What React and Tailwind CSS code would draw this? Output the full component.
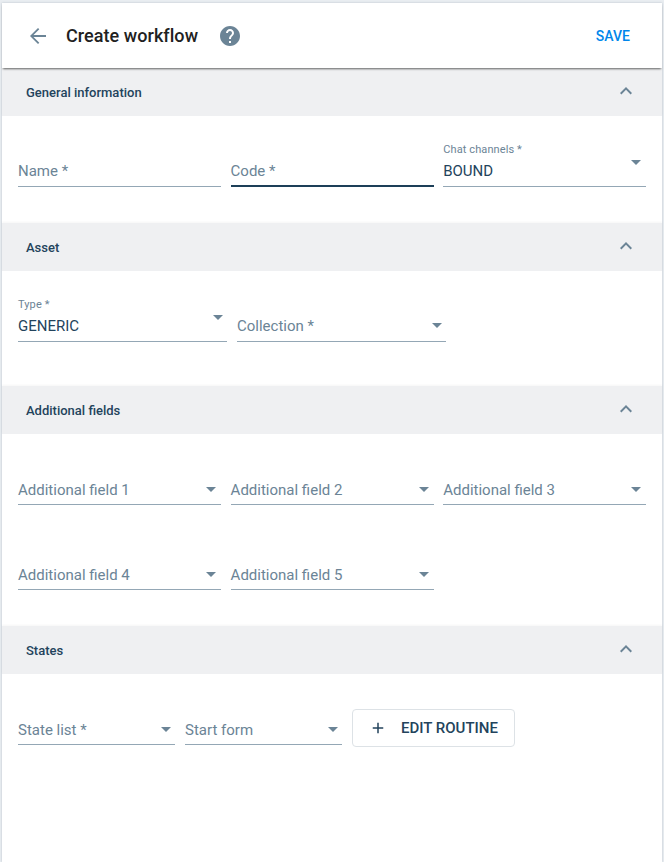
import React from "react";

function Section({ title, bodyClass, children }) {
  return (
    <section>
      <div className="flex h-12 items-center justify-between bg-[#eff0f2] pr-6 pl-6 shadow-[0_-1px_2px_rgba(0,0,0,0.04)]">
        <h2 className="pt-0.5 text-[13px] leading-5 font-medium text-[#23435c]">{title}</h2>
        <svg className="-mt-0.5 size-6 text-[#6b8496]" viewBox="0 0 24 24" fill="currentColor">
          <path d="M12 8l-6 6 1.41 1.41L12 10.83l4.59 4.58L18 14z" />
        </svg>
      </div>
      <div className={`px-4 pt-[26px] ${bodyClass}`}>{children}</div>
    </section>
  );
}

function Field({ label, value, select = false, focused = false, low = false, width = "" }) {
  return (
    <div
      className={`flex h-[45px] justify-between ${
        focused ? "border-b-2 border-[#1d3f58]" : "border-b border-[#94a7b5]"
      } ${low ? "pt-px" : ""} ${width}`}
    >
      <div className="flex flex-col whitespace-nowrap">
        <span className="h-[19px] text-[11px] leading-[15px] tracking-[0.01em] text-[#6b8496]">{value ? label : ""}</span>
        <span className={`text-[15px] leading-5 ${value ? "text-[#23435c]" : "text-[#6b8496]"}`}>
          {value || label}
        </span>
      </div>
      {select && (
        <svg
          className={`mr-1 h-[5px] w-2.5 text-[#6b8496] ${value ? "mt-[18px]" : "mt-[26px]"}`}
          viewBox="0 0 10 5"
          fill="currentColor"
        >
          <path d="M0 0l5 5 5-5z" />
        </svg>
      )}
    </div>
  );
}

export default function App() {
  return (
    <div className="h-[862px] overflow-hidden bg-[#e9edf1] px-0.5 pt-[3px] font-[Roboto,sans-serif]">
      <main className="h-full bg-white shadow-[0_0_2px_rgba(70,90,110,0.3)]">
        <header className="relative flex h-[65px] items-center bg-white pr-8 pl-6 shadow-[0_2px_2px_-1px_rgba(0,0,0,0.6)]">
          <svg className="size-6 text-[#6b8496]" viewBox="0 0 24 24" fill="currentColor">
            <path d="M20 11.1H7.5l5.8-5.8L12 4l-8 8 8 8 1.3-1.3-5.8-5.8H20z" />
          </svg>
          <h1 className="ml-4 w-[132px] text-lg leading-6 font-medium tracking-[0.003em] whitespace-nowrap text-[#212121]">
            Create workflow
          </h1>
          <svg className="ml-5 size-6 text-[#6b8496]" viewBox="0 0 24 24" fill="currentColor">
            <path d="M12 2C6.48 2 2 6.48 2 12s4.48 10 10 10 10-4.48 10-10S17.52 2 12 2zm1 17h-2v-2h2v2zm2.07-7.75l-.9.92C13.45 12.9 13 13.5 13 15h-2v-.5c0-1.1.45-2.1 1.17-2.83l1.24-1.26c.37-.36.59-.86.59-1.41 0-1.1-.9-2-2-2s-2 .9-2 2H8c0-2.21 1.79-4 4-4s4 1.79 4 4c0 .88-.36 1.68-.93 2.25z" />
          </svg>
          <button className="ml-auto pt-px text-sm font-medium text-[#0086eb]">SAVE</button>
        </header>

        <Section title="General information" bodyClass="grid grid-cols-[203px_203px_203px] gap-x-[9.6px] pb-9">
          <Field label="Name *" />
          <Field label="Code *" focused />
          <Field label="Chat channels *" value="BOUND" select width="[&>svg]:mr-[5px]" />
        </Section>

        <Section title="Asset" bodyClass="flex gap-x-2.5 pb-11">
          <Field label="Type *" value="GENERIC" select width="w-[209px]" />
          <Field label="Collection *" select width="w-[209px]" />
        </Section>

        <Section
          title="Additional fields"
          bodyClass="grid grid-cols-[203px_203px_203px] gap-x-[9.6px] gap-y-10 pb-9 [&_svg]:mr-[5px]"
        >
          <Field label="Additional field 1" select low />
          <Field label="Additional field 2" select low />
          <Field label="Additional field 3" select low />
          <Field label="Additional field 4" select low />
          <Field label="Additional field 5" select low />
        </Section>

        <Section title="States" bodyClass="flex gap-x-2.5">
          <Field label="State list *" select low width="w-[157px]" />
          <Field label="Start form" select low width="w-[157px]" />
          <button className="mt-[9px] flex h-[38px] w-[163px] items-center rounded border border-[#dde2e6] pl-[15px] text-[#23435c]">
            <svg className="size-5" viewBox="0 0 20 20" fill="none" stroke="currentColor" strokeWidth="1.5">
              <path d="M10 4.75v10.5M4.75 10h10.5" />
            </svg>
            <span className="ml-[13px] text-[15px] leading-5 font-medium whitespace-nowrap">EDIT ROUTINE</span>
          </button>
        </Section>
      </main>
    </div>
  );
}
